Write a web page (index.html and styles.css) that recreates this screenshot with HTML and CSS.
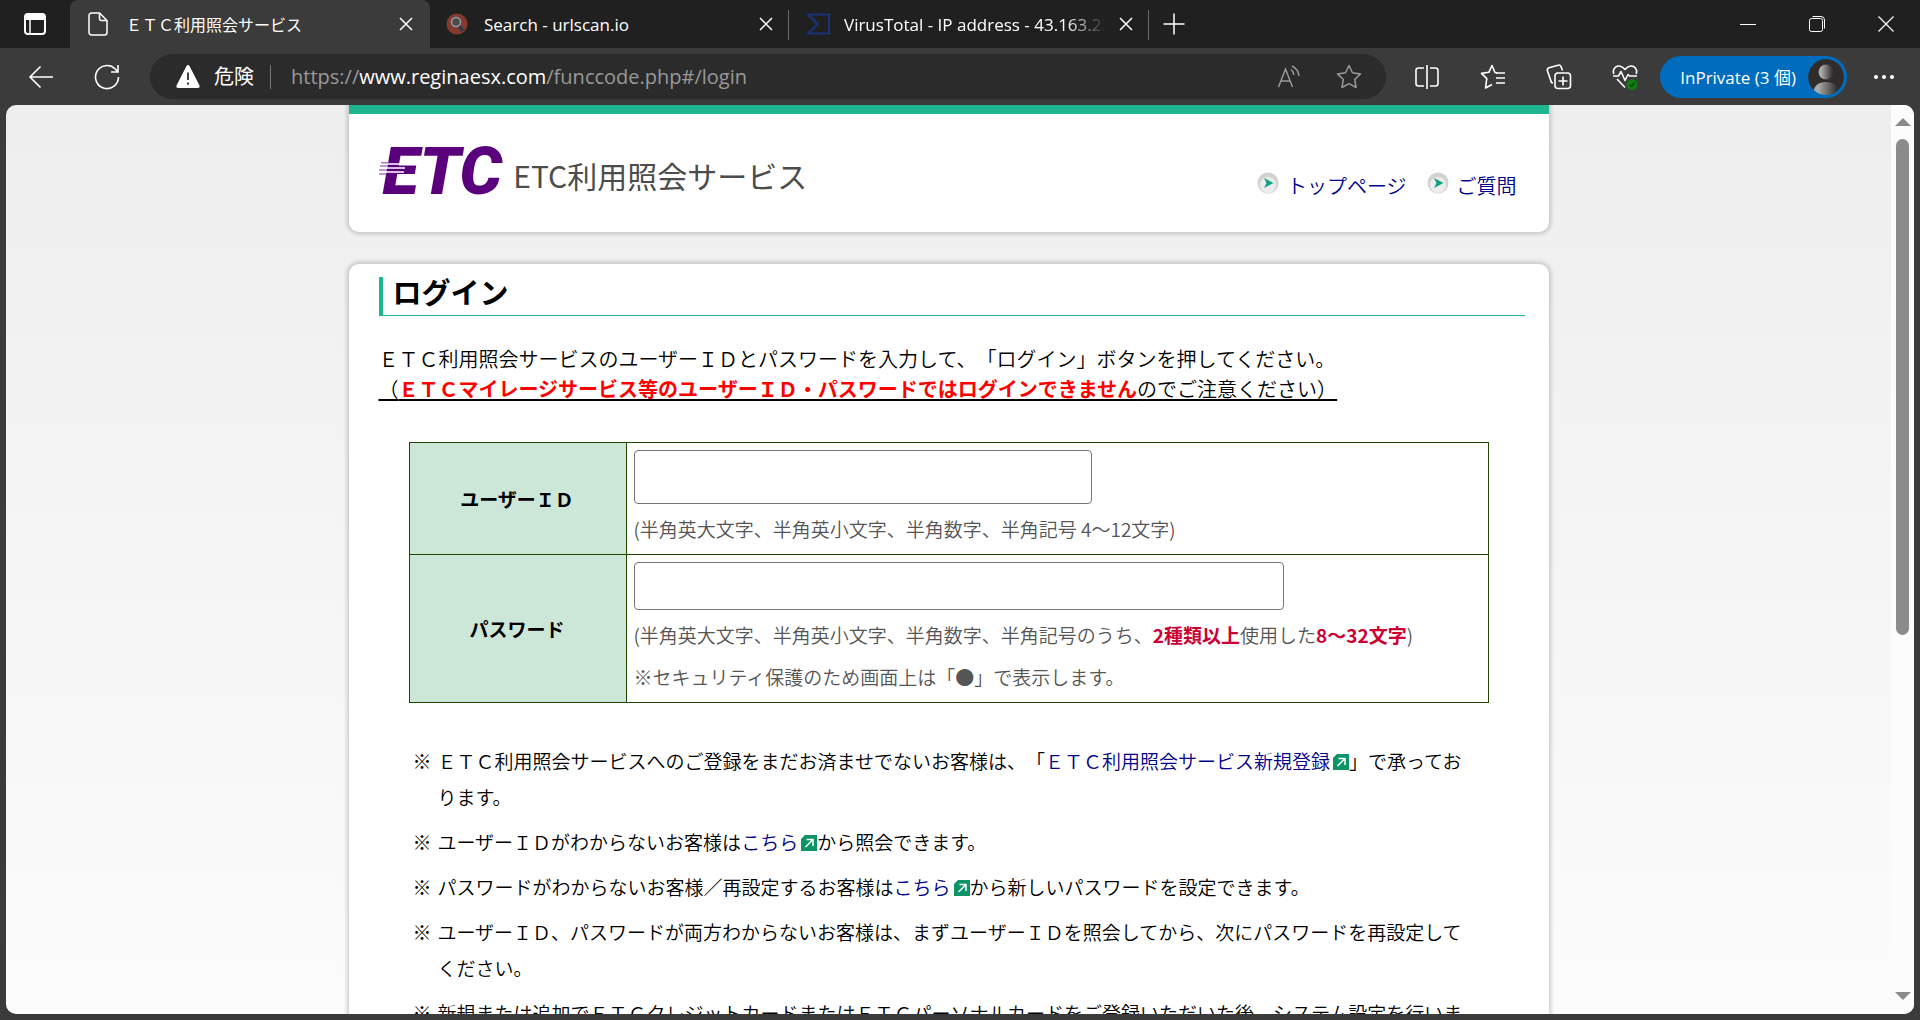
FILE: index.html
```html
<!DOCTYPE html>
<html lang="ja">
  <head>
    <meta charset="UTF-8" />
    <meta name="viewport" content="width=device-width, initial-scale=1.0" />
    <title>ＥＴＣ利用照会サービス</title>
    <link rel="stylesheet" href="styles.css">
  </head>
  <body>
    <!-- tab strip -->
    <div class="tab-strip">
      <button class="tab-menu" aria-label="タブ操作">
        <svg width="22" height="22" viewBox="0 0 22 22">
          <rect x="1" y="1" width="20" height="20" rx="3" fill="none" stroke="#fff" stroke-width="2" />
          <path d="M1 4a3 3 0 0 1 3-3h14a3 3 0 0 1 3 3v3H1z" fill="#fff" />
          <path d="M6 6v14" stroke="#fff" stroke-width="1.5" />
        </svg>
      </button>
      <div class="tab active">
        <svg width="20" height="24" viewBox="0 0 20 24" fill="none" stroke="#fff" stroke-width="1.5">
          <path d="M3.500 1h8L19 8.500V20.500a2.500 2.500 0 0 1-2.500 2.500h-13A2.500 2.500 0 0 1 1 20.500v-17A2.500 2.500 0 0 1 3.500 1z" />
          <path d="M11.500 1v5.500a2 2 0 0 0 2 2H19" />
        </svg>
        <span class="tab-title">ＥＴＣ利用照会サービス</span>
        <button class="tab-close" aria-label="閉じる">
          <svg width="14" height="14" viewBox="0 0 14 14"><path d="M1 1l12 12M13 1L1 13" stroke="#fff" stroke-width="1.5" /></svg>
        </button>
      </div>
      <div class="tab divided">
        <svg width="22" height="22" viewBox="0 0 22 22">
          <circle cx="11" cy="11" r="10.500" fill="#843a30" />
          <path d="M12 12l5 6" stroke="#2b3a44" stroke-width="3" />
          <circle cx="10" cy="9" r="4.500" fill="#4d4a4a" stroke="#8fa0aa" stroke-width="1.500" />
        </svg>
        <span class="tab-title">Search - urlscan.io</span>
        <button class="tab-close" aria-label="閉じる">
          <svg width="14" height="14" viewBox="0 0 14 14"><path d="M1 1l12 12M13 1L1 13" stroke="#fff" stroke-width="1.5" /></svg>
        </button>
      </div>
      <div class="tab divided">
        <svg width="24" height="22" viewBox="0 0 24 22"><path d="M2 1.500h21v19H2L11.500 11z" fill="none" stroke="#173478" stroke-width="2.200" /></svg>
        <span class="tab-title fade">VirusTotal - IP address - 43.163.23</span>
        <button class="tab-close" aria-label="閉じる">
          <svg width="14" height="14" viewBox="0 0 14 14"><path d="M1 1l12 12M13 1L1 13" stroke="#fff" stroke-width="1.5" /></svg>
        </button>
      </div>
      <button class="new-tab" aria-label="新しいタブ">
        <svg width="22" height="22" viewBox="0 0 22 22"><path d="M11 0.500v21M0.500 11h21" stroke="#fff" stroke-width="1.5" /></svg>
      </button>
      <div class="window-buttons">
        <button aria-label="最小化">
          <svg width="16" height="16" viewBox="0 0 16 16"><path d="M0 8.500h16" stroke="#fff" /></svg>
        </button>
        <button aria-label="元に戻す">
          <svg width="16" height="16" viewBox="0 0 16 16" fill="none" stroke="#fff">
            <rect x="0.500" y="2.500" width="13" height="13" rx="2" />
            <path d="M3.500 0.500H12a3.500 3.500 0 0 1 3.500 3.500v8.500" />
          </svg>
        </button>
        <button aria-label="閉じる">
          <svg width="16" height="16" viewBox="0 0 16 16"><path d="M0.500 0.500l15 15M15.500 0.500l-15 15" stroke="#fff" stroke-width="1.200" /></svg>
        </button>
      </div>
    </div>

    <!-- toolbar -->
    <div class="toolbar">
      <button class="nav-button" aria-label="戻る">
        <svg width="26" height="24" viewBox="0 0 26 24" fill="none" stroke="#fff" stroke-width="1.600"><path d="M25 12H2M12.500 1.500L2 12l10.500 10.500" /></svg>
      </button>
      <button class="nav-button" aria-label="更新">
        <svg width="26" height="26" viewBox="0 0 26 26" fill="none" stroke="#fff" stroke-width="1.600"><path d="M24.500 13A11.500 11.500 0 1 1 21 4.800L24 8M24 1v7h-7" /></svg>
      </button>
      <div class="address-bar">
        <svg width="24" height="23" viewBox="0 0 24 23">
          <path d="M10.500 1a1.700 1.700 0 0 1 3 0l10 19.500A1.700 1.700 0 0 1 22 23H2a1.700 1.700 0 0 1-1.500-2.500z" fill="#fff" />
          <path d="M12 7.500v7.500M12 17.500v2.200" stroke="#2b2b2b" stroke-width="1.800" />
        </svg>
        <span class="danger">危険</span>
        <span class="url">https://<b>www.reginaesx.com</b>/funccode.php#/login</span>
        <button class="dim" aria-label="音声で読み上げる">
          <svg width="24" height="24" viewBox="0 0 24 24" fill="none" stroke="#999" stroke-width="1.500">
            <path d="M1.500 22L8.500 4l7 18M4 16h9" />
            <path d="M14 4.500c1.800 1.400 2.800 3.300 2.800 5.500M15 1c4 2 6.500 5.500 7 10" />
          </svg>
        </button>
        <button class="dim" aria-label="お気に入りに追加">
          <svg width="26" height="26" viewBox="0 0 26 26" fill="none" stroke="#999" stroke-width="1.500" stroke-linejoin="round">
            <path d="M13 1.500l3.500 7.300 8 1.100-5.800 5.600 1.400 8-7.100-3.800-7.100 3.800 1.400-8L1.500 9.900l8-1.100z" />
          </svg>
        </button>
      </div>
      <div class="tools">
        <button aria-label="画面を分割する">
          <svg width="26" height="26" viewBox="0 0 26 26" fill="none" stroke="#fff" stroke-width="1.600">
            <path d="M13 1v24M10 4H4.500A2.500 2.500 0 0 0 2 6.500v13A2.500 2.500 0 0 0 4.500 22H10M16 4h5.500A2.500 2.500 0 0 1 24 6.500v13a2.500 2.500 0 0 1-2.500 2.500H16" />
          </svg>
        </button>
        <button aria-label="お気に入り">
          <svg width="26" height="26" viewBox="0 0 26 26" fill="none" stroke="#fff" stroke-width="1.600" stroke-linejoin="round">
            <path d="M17 9l-2-0.500L12 1.500 8.800 8.300 1.500 9.400l5.300 5.200L5.500 24l6.500-3.500" />
            <path d="M16 9h9M16 14h9M16 19h9" />
          </svg>
        </button>
        <button aria-label="コレクション">
          <svg width="26" height="26" viewBox="0 0 26 26" fill="none" stroke="#fff" stroke-width="1.600">
            <rect x="9" y="9" width="15.500" height="15.500" rx="3" />
            <path d="M17 12.500v9M12.500 17h9M7 19L5.500 18.500 1.500 7a2.500 2.500 0 0 1 1.500-3.200l9-2.600A2.500 2.500 0 0 1 15 2.500l1.500 4" />
          </svg>
        </button>
        <button aria-label="ブラウザーのエッセンシャル">
          <svg width="26" height="26" viewBox="0 0 26 26" fill="none" stroke="#fff" stroke-width="1.600" stroke-linejoin="round">
            <path d="M1.800 10C0 5 4 1.500 7.500 2c2.300 0.300 4 1.600 5.500 3.500C14.500 3.600 16.200 2.300 18.500 2c3.500-0.500 7.500 3 5.700 8M5 15l8 8.500" />
            <path d="M1 12h5.500L9 7.500l4 9 3-6 1.500 1.500H25" />
            <circle cx="20" cy="20.500" r="5.500" fill="#107c10" stroke="none" />
            <path d="M17.500 20.500l2 2 3-3.500" stroke="#0a3d0a" stroke-width="1.200" />
          </svg>
        </button>
      </div>
      <button class="profile">
        InPrivate (3 個)
        <svg width="36" height="36" viewBox="0 0 36 36">
          <defs>
            <linearGradient id="person"><stop offset="0.200" stop-color="#aaa" /><stop offset="0.900" stop-color="#333" /></linearGradient>
            <clipPath id="avatar"><circle cx="18" cy="18" r="18" /></clipPath>
          </defs>
          <g clip-path="url(#avatar)">
            <circle cx="18" cy="18" r="18" fill="#2f2c2b" />
            <circle cx="18" cy="13" r="7.500" fill="url(#person)" />
            <path d="M5 36c0-9 5-13 13-13s13 4 13 13z" fill="url(#person)" />
          </g>
        </svg>
      </button>
      <button class="more" aria-label="設定など">
        <svg width="22" height="6" viewBox="0 0 22 6" fill="#fff"><circle cx="3" cy="3" r="2" /><circle cx="11" cy="3" r="2" /><circle cx="19" cy="3" r="2" /></svg>
      </button>
    </div>

    <!-- page area -->
    <div class="viewport">
      <div class="page">
        <header class="card site-header">
          <div class="logo">
            <span class="logo-mark">ETC
              <svg class="logo-lines" width="28" height="14" viewBox="0 0 28 14">
                <path d="M2 2h25M1 6h25M0 10h25" stroke="#fff" stroke-width="1.500" />
                <path d="M2 0.700h8M1 4h8M0 8h8M0 12h7" stroke="#a87cbc" stroke-width="1.500" />
              </svg>
            </span>
            <span class="logo-name">ETC利用照会サービス</span>
          </div>
          <nav class="site-nav">
            <a href="#">
              <svg width="22" height="22" viewBox="0 0 22 22">
                <circle cx="11" cy="11" r="10.500" fill="#d2d2d2" /><circle cx="11" cy="13" r="8" fill="#ececec" />
                <path d="M7 6l9.500 5L7 16l2.500-5z" fill="#12a085" />
              </svg>
              トップページ
            </a>
            <a href="#">
              <svg width="22" height="22" viewBox="0 0 22 22">
                <circle cx="11" cy="11" r="10.500" fill="#d2d2d2" /><circle cx="11" cy="13" r="8" fill="#ececec" />
                <path d="M7 6l9.500 5L7 16l2.500-5z" fill="#12a085" />
              </svg>
              ご質問
            </a>
          </nav>
        </header>

        <main class="card content">
          <h1>ログイン</h1>
          <p class="lead">
            ＥＴＣ利用照会サービスのユーザーＩＤとパスワードを入力して、「ログイン」ボタンを押してください。<br />
            <span class="notice">（<strong>ＥＴＣマイレージサービス等のユーザーＩＤ・パスワードではログインできません</strong>のでご注意ください）</span>
          </p>

          <table class="login-table">
            <tr>
              <th><label for="user-id">ユーザーＩＤ</label></th>
              <td>
                <input type="text" id="user-id" class="user-input" />
                <p>(半角英大文字、半角英小文字、半角数字、半角記号 4～12文字)</p>
              </td>
            </tr>
            <tr>
              <th><label for="password">パスワード</label></th>
              <td>
                <input type="password" id="password" class="password-input" />
                <p>(半角英大文字、半角英小文字、半角数字、半角記号のうち、<strong>2種類以上</strong>使用した<strong>8～32文字</strong>)</p>
                <p>※セキュリティ保護のため画面上は「●」で表示します。</p>
              </td>
            </tr>
          </table>

          <ul class="notes">
            <li>ＥＴＣ利用照会サービスへのご登録をまだお済ませでないお客様は、「<a href="#">ＥＴＣ利用照会サービス新規登録<svg class="ext" width="16" height="16" viewBox="0 0 16 16"><path d="M4 0h12v16H0V4z" fill="#0c9468" /><path d="M4.500 12l6.500-6.500M5.500 4.500H12V11" fill="none" stroke="#fff" stroke-width="1.500" /></svg></a>」で承っております。</li>
            <li>ユーザーＩＤがわからないお客様は<a href="#">こちら<svg class="ext" width="16" height="16" viewBox="0 0 16 16"><path d="M4 0h12v16H0V4z" fill="#0c9468" /><path d="M4.500 12l6.500-6.500M5.500 4.500H12V11" fill="none" stroke="#fff" stroke-width="1.500" /></svg></a>から照会できます。</li>
            <li>パスワードがわからないお客様／再設定するお客様は<a href="#">こちら<svg class="ext" width="16" height="16" viewBox="0 0 16 16"><path d="M4 0h12v16H0V4z" fill="#0c9468" /><path d="M4.500 12l6.500-6.500M5.500 4.500H12V11" fill="none" stroke="#fff" stroke-width="1.500" /></svg></a>から新しいパスワードを設定できます。</li>
            <li>ユーザーＩＤ、パスワードが両方わからないお客様は、まずユーザーＩＤを照会してから、次にパスワードを再設定してください。</li>
            <li>新規または追加でＥＴＣクレジットカードまたはＥＴＣパーソナルカードをご登録いただいた後、システム設定を行いま</li>
          </ul>
        </main>
      </div>
      <div class="scrollbar">
        <svg width="16" height="8" viewBox="0 0 16 8"><path d="M8 0l8 8H0z" fill="#8b8b8b" /></svg>
        <div class="track"><div class="thumb"></div></div>
        <svg width="16" height="8" viewBox="0 0 16 8"><path d="M0 0h16L8 8z" fill="#8b8b8b" /></svg>
      </div>
    </div>
  </body>
</html>
```
FILE: styles.css
```css
* {
  box-sizing: border-box;
}
body {
  display: flex;
  flex-direction: column;
  height: 100vh;
  margin: 0;
  overflow: hidden;
  background: #3b3b3b;
  color: #000;
  font-family: "Noto Sans CJK JP", sans-serif;
  text-spacing-trim: space-all;
}
button {
  display: flex;
  align-items: center;
  justify-content: center;
  padding: 0;
  border: none;
  background: none;
  color: #fff;
}
svg {
  flex: none;
}
a {
  color: #00008b;
  text-decoration: none;
}
strong {
  font-weight: 700;
}

/* tab strip */
.tab-strip {
  display: flex;
  flex: none;
  height: 48px;
  background: #202020;
  color: #fff;
  font-family: "Open Sans", "Noto Sans CJK JP", sans-serif;
  font-size: 17px;
}
.tab-menu {
  width: 70px;
}
.tab {
  display: flex;
  align-items: center;
  position: relative;
  width: 360px;
  padding: 0 16px 0 18px;
}
.tab.active {
  border-radius: 8px 8px 0 0;
  background: #3b3b3b;
  font-size: 16px;
}
.tab.divided {
  padding-left: 16px;
}
.tab.divided::after {
  content: "";
  position: absolute;
  top: 10px;
  right: 1px;
  width: 1px;
  height: 30px;
  background: #6a6a6a;
}
.tab-title {
  flex: 1;
  margin: 0 12px 0 16px;
  overflow: hidden;
  white-space: nowrap;
}
.tab.active .tab-title {
  margin-left: 18px;
}
.tab-title.fade {
  margin-left: 14px;
  mask-image: linear-gradient(to right, #000 85%, transparent);
}
.tab-close {
  width: 16px;
  height: 24px;
}
.new-tab {
  width: 48px;
}
.window-buttons {
  display: flex;
  margin-left: auto;
}
.window-buttons button {
  width: 69px;
}

/* toolbar */
.toolbar {
  display: flex;
  flex: none;
  align-items: center;
  height: 57px;
  padding: 0 25px 0 8px;
  font-family: "Open Sans", "Noto Sans CJK JP", sans-serif;
}
.nav-button {
  width: 66px;
  height: 44px;
}
.address-bar {
  display: flex;
  flex: 1;
  align-items: center;
  height: 45px;
  margin-left: 10px;
  padding: 0 24px 0 26px;
  border-radius: 23px;
  background: #2b2b2b;
  color: #fff;
}
.danger {
  margin-left: 14px;
  padding-right: 16px;
  border-right: 1px solid #777;
  font-size: 20px;
  line-height: 24px;
}
.url {
  flex: 1;
  margin-left: 20px;
  color: #999;
  font-size: 20px;
  line-height: 28px;
  white-space: nowrap;
}
.url b {
  color: #fff;
  font-weight: normal;
}
.dim {
  width: 26px;
  margin-left: 34px;
}
.tools {
  display: flex;
  gap: 40px;
  margin: 0 22px 0 28px;
}
.profile {
  gap: 12px;
  height: 42px;
  padding: 0 3px 0 20px;
  border-radius: 21px;
  background: #006cbe;
  font-family: inherit;
  font-size: 17px;
}
.more {
  width: 22px;
  height: 44px;
  margin-left: 26px;
}

/* page area */
.viewport {
  display: flex;
  flex: 1;
  min-height: 0;
  margin: 0 6px 6px;
  border-radius: 10px;
  background: linear-gradient(#eee, #fcfcfc);
  font-weight: 350;
  overflow: hidden;
}
.page {
  flex: 1;
  overflow: hidden;
}
.card {
  max-width: 1200px;
  margin: 0 auto 32px;
  padding: 0 30px;
  border-radius: 10px;
  background: #fff;
  box-shadow: 0 0 4px 2px rgba(0, 0, 0, 0.18);
}
.site-header {
  display: flex;
  justify-content: space-between;
  height: 127px;
  border-top: 9px solid #1fb591;
  border-radius: 0 0 10px 10px;
}
.logo {
  display: flex;
  align-items: flex-start;
  padding-top: 18px;
}
.logo-mark {
  position: relative;
  padding-left: 4px;
  color: #5a007d;
  font-family: Roboto, sans-serif;
  font-size: 67px;
  font-style: italic;
  font-weight: 900;
  line-height: 78px;
}
.logo-lines {
  position: absolute;
  top: 30px;
  left: 0;
}
.logo-name {
  margin: 22px 0 0 11px;
  color: #4c4c4c;
  font-size: 30px;
  font-weight: 400;
  line-height: 42px;
}
.site-nav {
  display: flex;
  gap: 20px;
  padding: 58px 2px 0 0;
  font-size: 20px;
  line-height: 28px;
}
.site-nav a {
  display: flex;
  gap: 8px;
}
.content {
  padding: 13px 24px 40px 30px;
}
h1 {
  margin: 0 0 28px;
  padding: 0 0 10px 10px;
  border-bottom: 1px solid #1fb591;
  border-left: 4px solid #1fb591;
  font-size: 29px;
  line-height: 28px;
}
.lead {
  margin: 0 0 38px;
  font-size: 20px;
  line-height: 30px;
}
.notice {
  text-decoration: underline;
  text-decoration-thickness: 2px;
  text-underline-offset: 2px;
}
.notice strong {
  color: #f00;
}
.login-table {
  width: calc(100% - 66px);
  margin: 0 36px 0 30px;
  border-collapse: collapse;
  font-size: 19px;
}
.login-table th,
.login-table td {
  padding: 7px 8px 8px 7px;
  border: 1px solid #234700;
}
.login-table th {
  width: 217px;
  background: #cce6d8;
}
.login-table input {
  display: block;
  border: 1px solid #767676;
  border-radius: 4px;
  font-size: 19px;
}
.login-table .user-input {
  width: 458px;
  height: 54px;
}
.login-table .password-input {
  width: 650px;
  height: 48px;
}
.login-table p {
  margin: 8px 0 0;
  color: #555;
  line-height: 34px;
}
.login-table strong {
  color: #c03;
}
.notes {
  margin: 40px 50px 0 34px;
  padding: 0;
  font-size: 19px;
  line-height: 36px;
  list-style: none;
}
.notes li {
  margin-bottom: 9px;
  padding-left: 25px;
  text-indent: -25px;
}
.notes li::before {
  content: "※";
  display: inline-block;
  width: 25px;
  text-indent: 0;
}
.ext {
  margin-left: 3px;
  vertical-align: -1px;
}

/* scrollbar */
.scrollbar {
  display: flex;
  flex: none;
  flex-direction: column;
  align-items: center;
  width: 23px;
  padding: 13px 0 14px;
  background: #fcfcfc;
}
.track {
  flex: 1;
  padding: 13px 0;
}
.thumb {
  width: 13px;
  height: 59%;
  border-radius: 7px;
  background: #8b8b8b;
}
```
